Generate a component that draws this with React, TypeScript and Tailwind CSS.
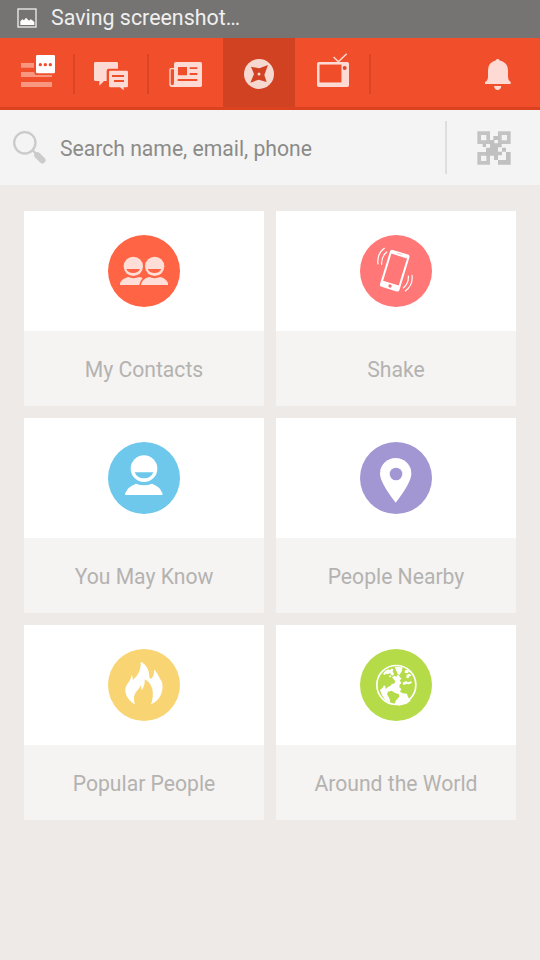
import type { ReactNode } from 'react';

const PINK = '#fddad3';

function StatusBar() {
  return (
    <div className="flex h-[38px] items-center bg-[#757472] pl-[17px]">
      <svg className="-mt-[2px] h-[20px] w-[20px]" viewBox="50 24 60 60">
        <rect x="53" y="27" width="54" height="54" fill="none" stroke="#eeeeee" strokeWidth="4" />
        <path d="M60 75V64l6-6 5 3 6-8 9 9 5-4 5 3 6 5v9z" fill="#fff" />
      </svg>
      <span className="ml-[14px] -mt-[3px] whitespace-nowrap text-[21.4px] leading-[26px] text-[#efefef]">Saving screenshot…</span>
    </div>
  );
}

function MenuIcon() {
  return (
    <svg className="h-[36px] w-[36px]" viewBox="60 162 108 108">
      <path d="M63 189h39v14H63zM63 216h39l4 9h50v6H63zM63 246h93v15H63z" fill="#f89680" />
      <rect x="108" y="165" width="57" height="55" rx="4" fill="#fff" />
      <g fill="#ef4e2b">
        <circle cx="121" cy="194" r="5" /><circle cx="136" cy="194" r="5" /><circle cx="151" cy="194" r="5" />
      </g>
    </svg>
  );
}

function ChatIcon() {
  return (
    <svg className="h-[30px] w-[36px]" viewBox="279 183 108 90">
      <path d="M286 186h64q4 0 4 4v16h-28q-6 0-6 6v31h-8l-14 14v-14h-12q-4 0-4-4v-49q0-4 4-4z" fill={PINK} />
      <path d="M331 212h49q4 0 4 4v42q0 4-4 4h-9v9l-11-9h-29q-4 0-4-4v-42q0-4 4-4z" fill={PINK} />
      <path d="M336 228h36M342 243h30" stroke="#f04e2b" strokeWidth="6" />
    </svg>
  );
}

function NewsIcon() {
  return (
    <svg className="h-[30px] w-[36px]" viewBox="504 180 108 90">
      <path d="M528 186h73q5 0 5 5v65q0 5-5 5h-85q-8 0-8-8v-44q0-5 5-5h9v-13q0-5 6-5z" fill={PINK} />
      <path d="M512 208h10v41q0 7-5 7t-5-7z" fill="#f04e2b" />
      <path d="M534 201h27v25h-27zM569 202h23v5h-23zM569 219h23v6h-23zM533 237h59v6h-59z" fill="#f04e2b" />
    </svg>
  );
}

function CompassIcon() {
  return (
    <svg className="h-[30px] w-[30px]" viewBox="87 87 90 90">
      <circle cx="132" cy="132" r="45" fill="#f7d8d1" />
      <path d="M108 110l25 5 26-10-11 30 7 21-24-7-25 9 11-26z" fill="#d14223" />
      <circle cx="132" cy="132" r="4.500" fill="#f7d8d1" />
    </svg>
  );
}

function TvIcon() {
  return (
    <svg className="h-[36px] w-[34px]" viewBox="303 66 102 108">
      <path d="M356 81l14 14 25-24" fill="none" stroke={PINK} strokeWidth="4.500" />
      <rect x="306" y="96" width="96" height="75" rx="5" fill={PINK} />
      <rect x="313.500" y="103.500" width="66" height="54" rx="3" fill="#f04e2b" stroke="#f59c86" strokeWidth="2.500" />
      <circle cx="389" cy="114" r="6" fill="#e0482a" />
    </svg>
  );
}

function BellIcon() {
  return (
    <svg className="h-[34px] w-[28px]" viewBox="807 84 84 102">
      <path d="M843 91q0-4 5-4t5 4q26 6 26 31v18q0 11 8 16v6h-77v-6q9-5 9-16v-18q0-25 24-31zM837 168h22q-2 12-11 12t-11-12z" fill={PINK} />
    </svg>
  );
}

function Divider() {
  return <div className="mt-[16px] h-[40px] w-[2px] bg-[#db4525]" />;
}

function TabBar() {
  return (
    <nav className="flex h-[72px] border-b-[3px] border-[#dc4120] bg-[#f14e2b]">
      <div className="w-[73px] pl-[20px] pt-[16px]"><MenuIcon /></div>
      <Divider />
      <div className="w-[72px] pl-[18px] pt-[23px]"><ChatIcon /></div>
      <Divider />
      <div className="w-[74px] pl-[19px] pt-[22px]"><NewsIcon /></div>
      <div className="w-[72px] bg-[#d14223] pl-[21px] pt-[21px]"><CompassIcon /></div>
      <div className="w-[74px] pl-[21px] pt-[14px]"><TvIcon /></div>
      <Divider />
      <div className="ml-auto pr-[28px] pt-[20px]"><BellIcon /></div>
    </nav>
  );
}

function QrIcon() {
  return (
    <svg className="h-[34px] w-[34px]" viewBox="141 78 102 102">
      <g fill="none" stroke="#c3c3c3" strokeWidth="11">
        <path d="M147.500 84.500h27v27h-27zM209.500 84.500h27v27h-27zM147.500 146.500h27v27h-27z" />
      </g>
      <path d="M190 93h14v12h-14zM179 105h14v12h-14zM192 115h23v12h-23zM158 117h10v9h-10zM180 117h12v11h-12zM168 128h36v24h-36zM180 122h24v30h-24zM204 140h12v11h-12zM192 152h12v13h-12zM216 128h12v12h-12zM228 141h14v38h-38v-14h24z" fill="#c0c0c0" />
    </svg>
  );
}

function SearchBar() {
  return (
    <div className="flex h-[75px] bg-[#f4f4f4]">
      <svg className="ml-[12px] mt-[20px] h-[34px] w-[34px]" viewBox="36 75 102 102">
        <circle cx="74.500" cy="113.500" r="32" fill="none" stroke="#cbcbcb" strokeWidth="7" />
        <path d="M97 135l12 12" stroke="#cbcbcb" strokeWidth="7" />
        <path d="M112 151l15 15" stroke="#cbcbcb" strokeWidth="19" strokeLinecap="round" />
      </svg>
      <span className="ml-[14px] mt-[26px] whitespace-nowrap text-[21.150px] leading-[26px] text-[#8b8b89]">Search name, email, phone</span>
      <div className="ml-auto mt-[11px] h-[53px] w-[2px] bg-[#dedede]" />
      <div className="w-[93px] pl-[30px] pt-[21px]"><QrIcon /></div>
    </div>
  );
}

function ContactsIcon() {
  return (
    <svg className="h-[72px] w-[72px]" viewBox="24 30 216 216">
      <circle cx="132" cy="138" r="108" fill="#ff6444" />
      <g fill="#ffded7">
        <path d="M60 180v-5q4-13 24-19 16 7 34 0l10 3q-7 7-10 21z" />
        <path d="M123 180q1-17 24-24 17 7 34 0 19 5 23 19v5z" />
        <circle cx="100" cy="124" r="29" />
        <circle cx="164" cy="124" r="29" />
      </g>
      <path d="M79 132h41q-5 12-20.500 12t-20.500-12zM143 132h41q-5 12-20.500 12t-20.500-12z" fill="#ff6444" />
    </svg>
  );
}

function ShakeIcon() {
  return (
    <svg className="h-[72px] w-[72px]" viewBox="30 30 216 216">
      <circle cx="138" cy="138" r="108" fill="#ff7877" />
      <g transform="rotate(17 134 137.500)">
        <rect x="103.500" y="79" width="61" height="116" rx="7" fill="#fff" />
        <rect x="109.500" y="91" width="49" height="85" fill="#ff7877" />
        <rect x="126" y="84" width="16" height="2" rx="1" fill="#ffabab" />
        <circle cx="134" cy="185" r="5" fill="#f47475" />
      </g>
      <path d="M103 70q-23 17-19 47M110 81q-16 14-15 37M186 151q4 29-20 47M175 153q2 21-15 36" fill="none" stroke="#fff" strokeWidth="3.500" strokeLinecap="round" />
    </svg>
  );
}

function PersonIcon() {
  return (
    <svg className="h-[72px] w-[72px]" viewBox="24 21 216 216">
      <circle cx="132" cy="129" r="108" fill="#6dc8ec" />
      <circle cx="132" cy="101" r="40" fill="#fff" />
      <path d="M104 112h56q-7 18-28 18t-28-18z" fill="#6dc8ec" />
      <path d="M78 180q-4 0-3-4 9-22 33-30 24 10 48 0 24 8 32 30 1 4-3 4z" fill="#fff" />
    </svg>
  );
}

function PinIcon() {
  return (
    <svg className="h-[72px] w-[72px]" viewBox="30 21 216 216">
      <circle cx="138" cy="129" r="108" fill="#a297d3" />
      <path d="M137 203Q90 142 90 116a47 47 0 0 1 94 0q0 26-47 87z" fill="#fff" />
      <circle cx="138" cy="117" r="19" fill="#a297d3" />
    </svg>
  );
}

function FlameIcon() {
  return (
    <svg className="h-[72px] w-[72px]" viewBox="24 27 216 216">
      <circle cx="132" cy="135" r="108" fill="#f8d473" />
      <path d="M105 193C85 181 76 167 76 149C76 132 94 123 95 104Q100 112 98 120C111 109 124 92 122 65C137 72 148 86 148 112L153 117Q164 106 162 89C174 99 177 113 185 124C193 145 184 182 153 193C164 165 160 130 134 118Q136 136 125 151Q125 144 121 136Q120 146 110 154C101 163 100 180 105 193Z" fill="#fff" />
    </svg>
  );
}

function GlobeIcon() {
  return (
    <svg className="h-[72px] w-[72px]" viewBox="30 27 216 216">
      <circle cx="138" cy="135" r="108" fill="#b5db49" />
      <circle cx="139" cy="135" r="58.500" fill="#b5db49" stroke="#fff" strokeWidth="5" />
      <g fill="#fff">
        <path d="M134 80l24 2-3 12-7 12-5-5-5-11z" />
        <path d="M126 112l8-5 5 3 5-7 6 9 5 4-6 5 5 8-5 5-1 8 6 5-4 8 8 5 13 1 3 10 8 11-12 9-23 6-13-5 3-10 11-12-1-7-13-5-9-6-11 3-3 7 8 15 2 12-15-8-10-15-6-16 8-7 4-7 4 3 1 8 7-6 8-4 3-5 7-1 4-7z" />
        <path d="M105 94l8-6 8 2 4-5 5 3-2 7 4 6-3 6-6-3-3-6-6 5-6-2-4 4-5-3z" />
        <path d="M119 106l5 1-2 5-5-2zM165 91l8-1 5 6-8 4-6-2zM170 104l9-3 5 6-6 2-3 6-6-1zM158 128l10-5 6 4 9-3 3 4-9 5-8-1-9 3z" />
      </g>
    </svg>
  );
}

function Card({ label, children }: { label: string; children: ReactNode }) {
  return (
    <div className="h-[195px]">
      <div className="flex h-[120px] items-center justify-center bg-white">{children}</div>
      <div className="flex h-[75px] items-center justify-center bg-[#f5f4f2] pt-[3px] text-[21.150px] leading-[26px] text-[#b4b2b0]">{label}</div>
    </div>
  );
}

export default function App() {
  return (
    <div className="h-[960px] w-[540px] overflow-hidden bg-[#eeeae7] font-['Roboto','Noto_Sans',sans-serif]">
      <StatusBar />
      <TabBar />
      <SearchBar />
      <main className="grid grid-cols-2 gap-3 px-6 pt-[26px]">
        <Card label="My Contacts"><ContactsIcon /></Card>
        <Card label="Shake"><ShakeIcon /></Card>
        <Card label="You May Know"><PersonIcon /></Card>
        <Card label="People Nearby"><PinIcon /></Card>
        <Card label="Popular People"><FlameIcon /></Card>
        <Card label="Around the World"><GlobeIcon /></Card>
      </main>
    </div>
  );
}
